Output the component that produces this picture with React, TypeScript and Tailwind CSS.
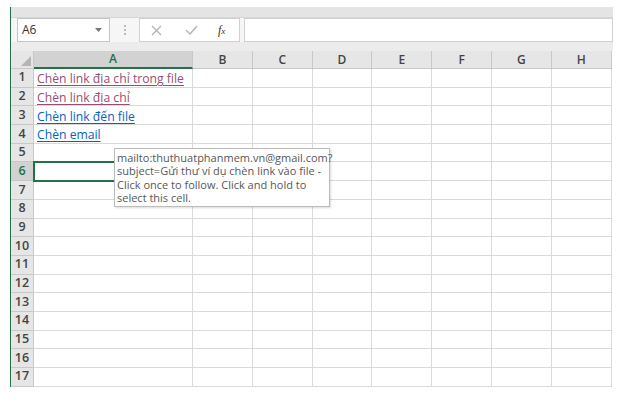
import React from "react";

const cols = ["A", "B", "C", "D", "E", "F", "G", "H"];
const rows = Array.from({ length: 17 }, (_, i) => i + 1);

const links: Record<number, { text: string; color: string }> = {
  1: { text: "Chèn link địa chỉ trong file", color: "text-[#954f72] decoration-[#954f72]" },
  2: { text: "Chèn link địa chỉ", color: "text-[#954f72] decoration-[#954f72]" },
  3: { text: "Chèn link đến file", color: "text-[#0563c1] decoration-[#0563c1]" },
  4: { text: "Chèn email", color: "text-[#0563c1] decoration-[#0563c1]" },
};

export default function App() {
  return (
    <div className="relative h-[401px] w-[628px] bg-white font-['Open_Sans',sans-serif]">
      <div className="ml-[10px] pt-[7px] w-[603px]">
        <div className="border-l border-[#217346]">
          {/* Top ribbon edge */}
          <div className="h-[11px] bg-[#e4e4e4] border-b border-[#d6d6d6]" />

          {/* Formula bar */}
          <div className="flex h-[24px] items-stretch bg-[#f6f6f6]">
            <div className="ml-[6px] flex w-[93px] items-center justify-between border border-[#c6c6c6] bg-white pl-[4px] pr-[7px]">
              <span className="text-[12px] text-[#333]">A6</span>
              <svg width="7" height="4" viewBox="0 0 7 4">
                <path d="M0 0h7L3.5 4z" fill="#777" />
              </svg>
            </div>
            <div className="flex w-[29px] flex-col items-center justify-center gap-[2px]">
              <span className="h-[2px] w-[2px] bg-[#bbb]" />
              <span className="h-[2px] w-[2px] bg-[#bbb]" />
              <span className="h-[2px] w-[2px] bg-[#bbb]" />
            </div>
            <div className="flex w-[101px] items-center border border-[#d0d0d0] bg-white">
              <svg className="ml-[11px]" width="11" height="11" viewBox="0 0 11 11">
                <path d="M1 1l9 9M10 1l-9 9" stroke="#b4b4b4" strokeWidth="1.3" />
              </svg>
              <svg className="ml-[23px]" width="13" height="10" viewBox="0 0 13 10">
                <path d="M1 5l4 4 7-8" stroke="#b4b4b4" strokeWidth="1.4" fill="none" />
              </svg>
              <span className="ml-[20px] font-['Liberation_Serif',serif] text-[12px] italic text-[#333]">
                f<span className="text-[9px]">x</span>
              </span>
            </div>
            <div className="ml-[4px] flex-1 border border-[#d0d0d0] bg-white" />
          </div>
          <div className="h-[9px] bg-[#ececec]" />

          {/* Sheet grid */}
          <div className="grid grid-cols-[23px_159px_repeat(7,59.8px)] grid-rows-[18px_repeat(17,18.7px)]">
            <div className="relative border-b border-r border-[#c8c8c8] bg-[#e6e6e6]">
              <svg className="absolute bottom-[2px] right-[2px]" width="10" height="10" viewBox="0 0 10 10">
                <path d="M10 0v10H0z" fill="#b5b5b5" />
              </svg>
            </div>
            {cols.map((c) =>
              c === "A" ? (
                <div
                  key={c}
                  className="flex items-center justify-center border-b-2 border-r border-b-[#217346] border-r-[#c8c8c8] bg-[#d2d2d2] text-[12px] font-semibold text-[#217346]"
                >
                  {c}
                </div>
              ) : (
                <div
                  key={c}
                  className="flex items-center justify-center border-b border-r border-[#c8c8c8] bg-[#e6e6e6] text-[12px] font-semibold text-[#444]"
                >
                  {c}
                </div>
              )
            )}
            {rows.map((r) => (
              <React.Fragment key={r}>
                <div
                  className={
                    r === 6
                      ? "flex items-center justify-center border-b border-r border-[#c8c8c8] bg-[#d2d2d2] text-[12.5px] font-semibold text-[#217346]"
                      : "flex items-center justify-center border-b border-r border-[#c8c8c8] bg-[#e6e6e6] text-[12.5px] font-semibold text-[#444]"
                  }
                >
                  {r}
                </div>
                <div
                  className={
                    r === 6
                      ? "relative border-b border-r border-[#d9d9d9] outline-2 -outline-offset-1 outline-[#217346]"
                      : "flex items-center border-b border-r border-[#d9d9d9] pl-[3px] pt-[3px]"
                  }
                >
                  {links[r] && (
                    <span className={`whitespace-nowrap text-[12.2px] leading-none underline underline-offset-2 ${links[r].color}`}>
                      {links[r].text}
                    </span>
                  )}
                </div>
                {cols.slice(1).map((c) => (
                  <div key={c} className="border-b border-r border-[#d9d9d9]" />
                ))}
              </React.Fragment>
            ))}
          </div>
        </div>
      </div>

      {/* Hyperlink tooltip */}
      <div className="absolute left-[114px] top-[148px] w-[216px] border border-[#bcbcbc] bg-white px-[2px] py-[2px] text-[11px] leading-[13.3px] text-[#575757] shadow-[1px_1px_2px_rgba(0,0,0,0.15)]">
        <div>mailto:thuthuatphanmem.vn@gmail.com?</div>
        <div>subject=Gửi thư ví dụ chèn link vào file -</div>
        <div>Click once to follow. Click and hold to</div>
        <div>select this cell.</div>
      </div>
    </div>
  );
}
